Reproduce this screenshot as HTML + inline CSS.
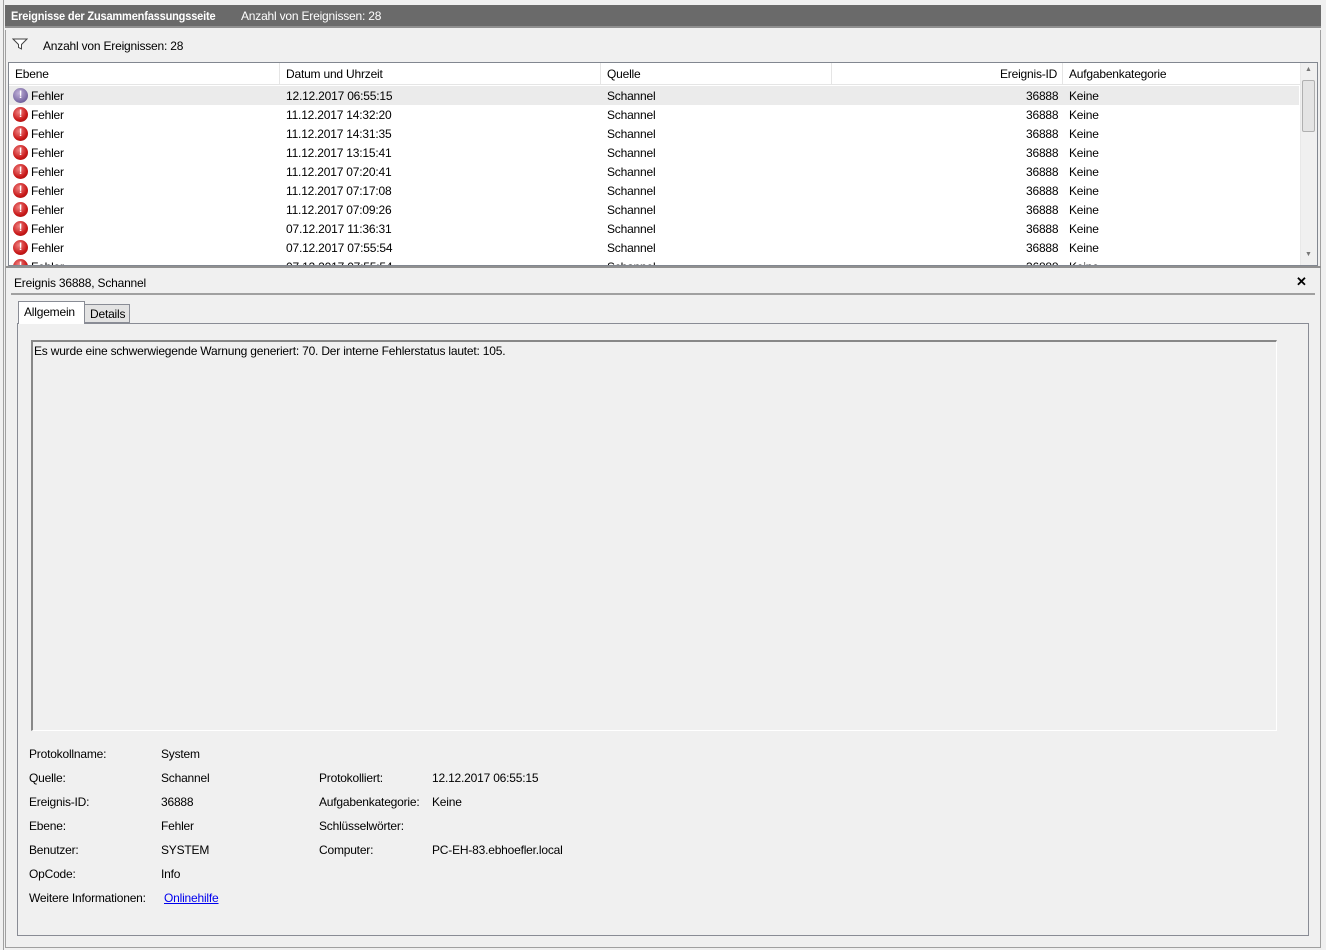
<!DOCTYPE html>
<html><head><style>
*{margin:0;padding:0;box-sizing:border-box}
body{width:1326px;height:950px;background:#f0f0f0;font-family:"Liberation Sans",sans-serif;font-size:12px;letter-spacing:-0.2px;color:#000;position:relative;overflow:hidden}
.a{position:absolute;white-space:nowrap}
.row{position:absolute;left:9px;width:1290px;height:19px}
.row span{position:absolute;top:3px}
.ic{position:absolute;left:4px;top:2px;width:15px;height:15px;border-radius:50%;background:radial-gradient(circle at 40% 35%,#f08080,#c81818 60%,#901010);color:#fff;font-weight:bold;font-size:11px;text-align:center;line-height:15px}
.lbl{position:absolute;white-space:nowrap}
</style></head><body>
<div class="a" style="left:3px;top:0;width:1px;height:950px;background:#a0a0a0"></div>
<div class="a" style="left:5px;top:5px;width:1316px;height:23px;background:#6a6a6a;border-bottom:2px solid #909090"></div>
<div class="a" style="left:11px;top:9px;color:#fff;font-weight:bold;transform:scaleX(0.92);transform-origin:left">Ereignisse der Zusammenfassungsseite</div>
<div class="a" style="left:241px;top:9px;color:#fff">Anzahl von Ereignissen: 28</div>
<div class="a" style="left:5px;top:30px;width:1316px;height:918px;border:1px solid #a0a0a0;border-top:none"></div>
<svg class="a" style="left:12px;top:38px" width="16" height="12" viewBox="0 0 16 12"><path d="M1 1H15L9.5 6.5V11L6.5 9.5V6.5Z" fill="#fff" stroke="#444" stroke-width="1"/></svg>
<div class="a" style="left:43px;top:39px">Anzahl von Ereignissen: 28</div>
<div class="a" style="left:8px;top:62px;width:1310px;height:204px;background:#fff;border:1px solid #828790"></div>
<div class="a" style="left:9px;top:63px;width:1291px;height:22px;background:#fff;border-bottom:1px solid #e5e5e5"></div>
<div class="a" style="left:279px;top:63px;width:1px;height:22px;background:#e5e5e5"></div>
<div class="a" style="left:600px;top:63px;width:1px;height:22px;background:#e5e5e5"></div>
<div class="a" style="left:831px;top:63px;width:1px;height:22px;background:#e5e5e5"></div>
<div class="a" style="left:1062px;top:63px;width:1px;height:22px;background:#e5e5e5"></div>
<div class="a" style="left:15px;top:67px">Ebene</div>
<div class="a" style="left:286px;top:67px">Datum und Uhrzeit</div>
<div class="a" style="left:607px;top:67px">Quelle</div>
<div class="a" style="left:1000px;top:67px">Ereignis-ID</div>
<div class="a" style="left:1069px;top:67px">Aufgabenkategorie</div>
<div class="a" style="left:1300px;top:63px;width:17px;height:202px;background:#f0f0f0;border-left:1px solid #e8e8e8"></div>
<div class="a" style="left:1302px;top:80px;width:13px;height:52px;background:#e4e4e4;border:1px solid #b0b0b0;border-radius:2px"></div>
<div class="a" style="left:1305px;top:66px;font-size:7px;color:#777">▲</div>
<div class="a" style="left:1305px;top:251px;font-size:7px;color:#777">▼</div>
<div style="position:absolute;left:9px;top:86px;width:1291px;height:179px;overflow:hidden">
<div class="row" style="left:0;top:0;background:#ebebeb"><div class="ic" style="background:radial-gradient(circle at 40% 35%,#c0b0d8,#8070a8 60%,#504080)">!</div><span style="left:22px">Fehler</span><span style="left:277px">12.12.2017 06:55:15</span><span style="left:598px">Schannel</span><span style="left:1017px">36888</span><span style="left:1060px">Keine</span></div>
<div class="row" style="left:0;top:19px"><div class="ic">!</div><span style="left:22px">Fehler</span><span style="left:277px">11.12.2017 14:32:20</span><span style="left:598px">Schannel</span><span style="left:1017px">36888</span><span style="left:1060px">Keine</span></div>
<div class="row" style="left:0;top:38px"><div class="ic">!</div><span style="left:22px">Fehler</span><span style="left:277px">11.12.2017 14:31:35</span><span style="left:598px">Schannel</span><span style="left:1017px">36888</span><span style="left:1060px">Keine</span></div>
<div class="row" style="left:0;top:57px"><div class="ic">!</div><span style="left:22px">Fehler</span><span style="left:277px">11.12.2017 13:15:41</span><span style="left:598px">Schannel</span><span style="left:1017px">36888</span><span style="left:1060px">Keine</span></div>
<div class="row" style="left:0;top:76px"><div class="ic">!</div><span style="left:22px">Fehler</span><span style="left:277px">11.12.2017 07:20:41</span><span style="left:598px">Schannel</span><span style="left:1017px">36888</span><span style="left:1060px">Keine</span></div>
<div class="row" style="left:0;top:95px"><div class="ic">!</div><span style="left:22px">Fehler</span><span style="left:277px">11.12.2017 07:17:08</span><span style="left:598px">Schannel</span><span style="left:1017px">36888</span><span style="left:1060px">Keine</span></div>
<div class="row" style="left:0;top:114px"><div class="ic">!</div><span style="left:22px">Fehler</span><span style="left:277px">11.12.2017 07:09:26</span><span style="left:598px">Schannel</span><span style="left:1017px">36888</span><span style="left:1060px">Keine</span></div>
<div class="row" style="left:0;top:133px"><div class="ic">!</div><span style="left:22px">Fehler</span><span style="left:277px">07.12.2017 11:36:31</span><span style="left:598px">Schannel</span><span style="left:1017px">36888</span><span style="left:1060px">Keine</span></div>
<div class="row" style="left:0;top:152px"><div class="ic">!</div><span style="left:22px">Fehler</span><span style="left:277px">07.12.2017 07:55:54</span><span style="left:598px">Schannel</span><span style="left:1017px">36888</span><span style="left:1060px">Keine</span></div>
<div class="row" style="left:0;top:171px"><div class="ic">!</div><span style="left:22px">Fehler</span><span style="left:277px">07.12.2017 07:55:54</span><span style="left:598px">Schannel</span><span style="left:1017px">36888</span><span style="left:1060px">Keine</span></div>
</div>
<div class="a" style="left:6px;top:266px;width:1315px;height:2px;background:#909090"></div>
<div class="a" style="left:14px;top:276px">Ereignis 36888, Schannel</div>
<div class="a" style="left:1296px;top:274px;font-weight:bold;font-size:13px">✕</div>
<div class="a" style="left:11px;top:293px;width:1304px;height:2px;background:#a0a0a0"></div>
<div class="a" style="left:17px;top:323px;width:1292px;height:613px;border:1px solid #898c95"></div>
<div class="a" style="left:18px;top:301px;width:67px;height:23px;background:#fff;border:1px solid #898c95;border-bottom:none"></div>
<div class="a" style="left:24px;top:305px">Allgemein</div>
<div class="a" style="left:85px;top:304px;width:45px;height:19px;background:#e3e3e3;border:1px solid #898c95;border-left:none"></div>
<div class="a" style="left:90px;top:307px">Details</div>
<div class="a" style="left:31px;top:340px;width:1246px;height:391px;border:1px solid #fff;border-left:2px solid #888;border-top:2px solid #888"></div>
<div class="a" style="left:34px;top:344px">Es wurde eine schwerwiegende Warnung generiert: 70. Der interne Fehlerstatus lautet: 105.</div>
<div class="lbl" style="left:29px;top:747px">Protokollname:</div><div class="lbl" style="left:161px;top:747px">System</div>
<div class="lbl" style="left:29px;top:771px">Quelle:</div><div class="lbl" style="left:161px;top:771px">Schannel</div>
<div class="lbl" style="left:319px;top:771px">Protokolliert:</div><div class="lbl" style="left:432px;top:771px">12.12.2017 06:55:15</div>
<div class="lbl" style="left:29px;top:795px">Ereignis-ID:</div><div class="lbl" style="left:161px;top:795px">36888</div>
<div class="lbl" style="left:319px;top:795px">Aufgabenkategorie:</div><div class="lbl" style="left:432px;top:795px">Keine</div>
<div class="lbl" style="left:29px;top:819px">Ebene:</div><div class="lbl" style="left:161px;top:819px">Fehler</div>
<div class="lbl" style="left:319px;top:819px">Schlüsselwörter:</div>
<div class="lbl" style="left:29px;top:843px">Benutzer:</div><div class="lbl" style="left:161px;top:843px">SYSTEM</div>
<div class="lbl" style="left:319px;top:843px">Computer:</div><div class="lbl" style="left:432px;top:843px">PC-EH-83.ebhoefler.local</div>
<div class="lbl" style="left:29px;top:867px">OpCode:</div><div class="lbl" style="left:161px;top:867px">Info</div>
<div class="lbl" style="left:29px;top:891px">Weitere Informationen:</div><div class="lbl" style="left:164px;top:891px;color:#0000ee;text-decoration:underline">Onlinehilfe</div>
</body></html>
